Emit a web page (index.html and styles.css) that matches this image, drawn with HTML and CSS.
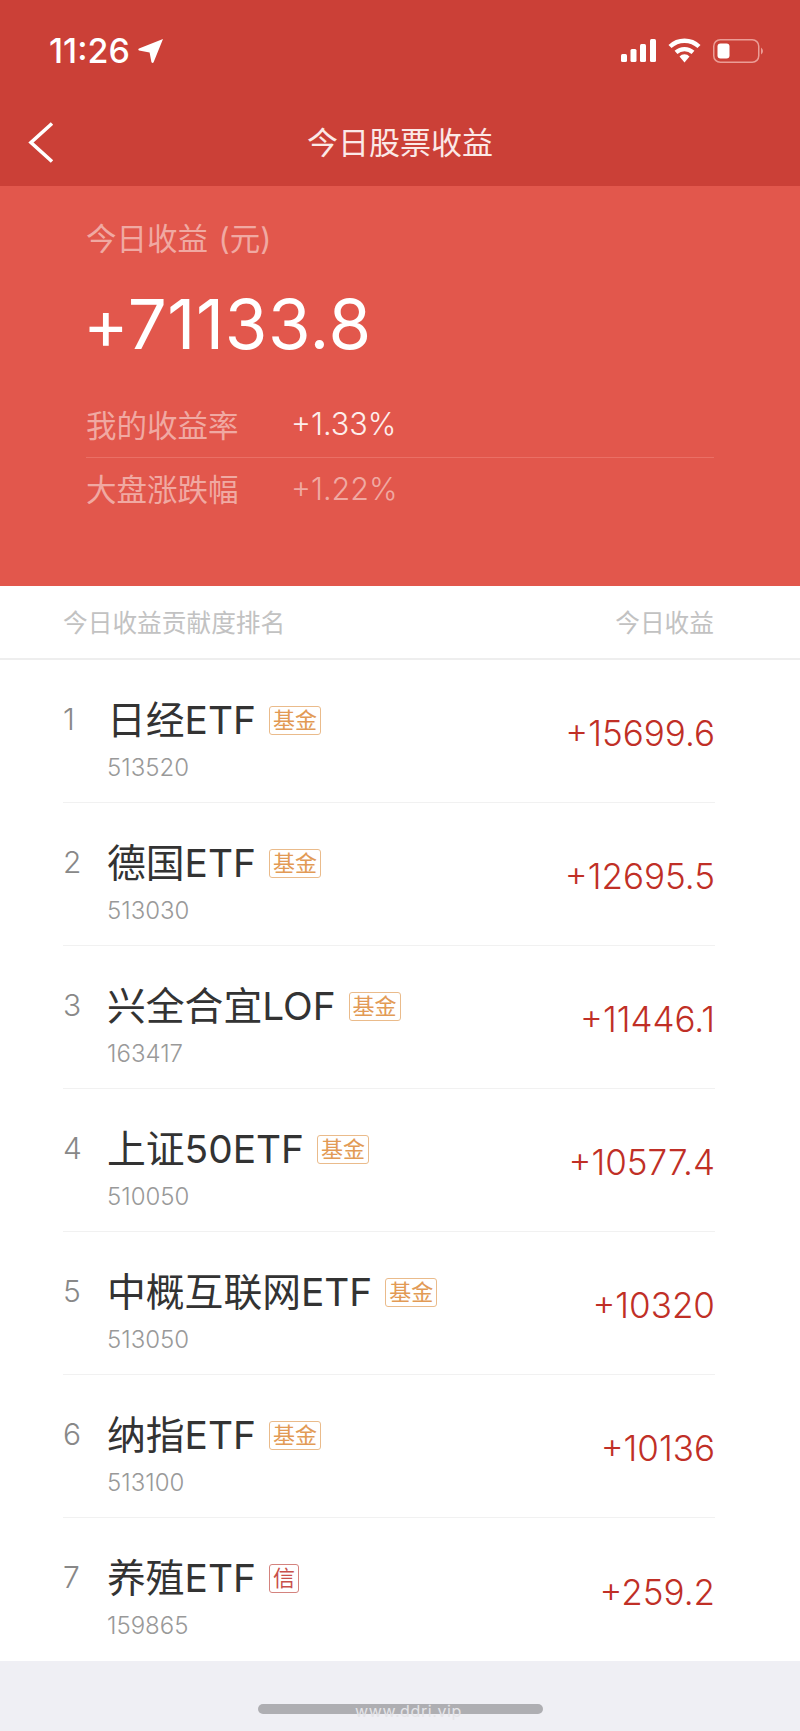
FILE: index.html
```html
<!DOCTYPE html>
<html>
	<head>
		<meta charset="utf-8">
		<title>今日股票收益</title>
		<link rel="stylesheet" href="styles.css">
	</head>
	<body>
		<div class="top">
			<div class="status">
				<div class="clock">
					<span>11:26</span>
					<svg class="arrow" width="25" height="24" viewBox="0 0 25 24"><path d="M25 0 L15.5 23.5 Q14.2 24.6 13.4 23 L11.6 13.6 L1 11.6 Q-.4 10.6 1 9.6 Z" fill="#fff"/></svg>
				</div>
				<div class="status-icons">
					<svg width="35" height="23" viewBox="0 0 35 23" fill="#fff">
						<rect x="0" y="15" width="6" height="8" rx="1.5"/>
						<rect x="9.5" y="10" width="6" height="13" rx="1.5"/>
						<rect x="19" y="5" width="6" height="18" rx="1.5"/>
						<rect x="29" y="0" width="6" height="23" rx="1.5"/>
					</svg>
					<svg width="33" height="25" viewBox="0 0 33 25">
						<path d="M2 8.5 A21 21 0 0 1 31 8.5" fill="none" stroke="#fff" stroke-width="4.4"/>
						<path d="M8 14.4 A12.5 12.5 0 0 1 25 14.4" fill="none" stroke="#fff" stroke-width="4.2"/>
						<path d="M11.5 18.4 A7 7 0 0 1 21.5 18.4 L16.5 24.5 Z" fill="#fff"/>
					</svg>
					<svg width="50" height="24" viewBox="0 0 50 24">
						<rect x=".75" y=".75" width="45" height="22.5" rx="6.5" fill="none" stroke="#eb9d96" stroke-width="1.5"/>
						<rect x="4.5" y="4.5" width="12" height="15" rx="3" fill="#fff"/>
						<path d="M48 8.5 Q50 10 50 12 Q50 14 48 15.5 Z" fill="#eb9d96"/>
					</svg>
				</div>
			</div>
			<div class="nav">
				<svg class="back" width="26" height="41" viewBox="0 0 26 41"><path d="M24 1.5 L3 20.5 L24 39.5" fill="none" stroke="#fff" stroke-width="3.6"/></svg>
				<div class="nav-title">今日股票收益</div>
			</div>
		</div>

		<div class="hero">
			<div class="hero-label">今日收益 (元)</div>
			<div class="hero-num">+71133.8</div>
			<div class="rate rate-line">
				<span class="rate-name">我的收益率</span>
				<span class="rate-val">+1.33%</span>
			</div>
			<div class="rate rate-low">
				<span class="rate-name">大盘涨跌幅</span>
				<span class="rate-val dim">+1.22%</span>
			</div>
		</div>

		<div class="head">
			<span>今日收益贡献度排名</span>
			<span>今日收益</span>
		</div>

		<div class="list">
			<div class="row">
				<div class="rank">1</div>
				<div class="info">
					<div class="name"><span>日经ETF</span><span class="tag">基金</span></div>
					<div class="code">513520</div>
				</div>
				<div class="gain">+15699.6</div>
			</div>
			<div class="row">
				<div class="rank">2</div>
				<div class="info">
					<div class="name"><span>德国ETF</span><span class="tag">基金</span></div>
					<div class="code">513030</div>
				</div>
				<div class="gain">+12695.5</div>
			</div>
			<div class="row">
				<div class="rank">3</div>
				<div class="info">
					<div class="name"><span>兴全合宜LOF</span><span class="tag">基金</span></div>
					<div class="code">163417</div>
				</div>
				<div class="gain">+11446.1</div>
			</div>
			<div class="row">
				<div class="rank">4</div>
				<div class="info">
					<div class="name"><span>上证50ETF</span><span class="tag">基金</span></div>
					<div class="code">510050</div>
				</div>
				<div class="gain">+10577.4</div>
			</div>
			<div class="row">
				<div class="rank">5</div>
				<div class="info">
					<div class="name"><span>中概互联网ETF</span><span class="tag">基金</span></div>
					<div class="code">513050</div>
				</div>
				<div class="gain">+10320</div>
			</div>
			<div class="row">
				<div class="rank">6</div>
				<div class="info">
					<div class="name"><span>纳指ETF</span><span class="tag">基金</span></div>
					<div class="code">513100</div>
				</div>
				<div class="gain">+10136</div>
			</div>
			<div class="row">
				<div class="rank">7</div>
				<div class="info">
					<div class="name"><span>养殖ETF</span><span class="tag tag-red">信</span></div>
					<div class="code">159865</div>
				</div>
				<div class="gain">+259.2</div>
			</div>
		</div>

		<div class="bottom">
			<div class="home"></div>
			<div class="mark">www.ddri.vip</div>
		</div>
	</body>
</html>
```

FILE: styles.css
```css
*{
	margin: 0;
	padding: 0;
	box-sizing: border-box;
}
body{
	width: 800px;
	height: 1731px;
	overflow: hidden;
	background-color: #efeff4;
	font-family: Inter, "Noto Sans CJK SC", sans-serif;
}

/* status bar + nav */
.top{
	height: 186px;
	background-color: #cb4037;
	color: #fff;
}
.status{
	display: flex;
	justify-content: space-between;
	align-items: flex-start;
	height: 100px;
	padding: 38px 37px 0 49px;
}
.clock{
	display: flex;
	align-items: center;
	height: 25px;
	font-weight: 500;
	font-size: 34px;
	line-height: 25px;
}
.arrow{
	margin-left: 8px;
}
.status-icons{
	display: flex;
	align-items: center;
	gap: 12px;
}
.nav{
	position: relative;
	display: flex;
	justify-content: center;
	align-items: center;
	height: 86px;
}
.back{
	position: absolute;
	left: 28px;
	top: 22px;
}
.nav-title{
	font-size: 31px;
	line-height: 40px;
	color: #fbe9e7;
}

/* summary block */
.hero{
	height: 400px;
	padding: 32px 86px 0;
	background-color: #e2574c;
	color: #f0a9a2;
}
.hero-label{
	font-size: 30.5px;
	line-height: 42px;
	word-spacing: 2px;
}
.hero-num{
	margin: 26px 0 30px -3px;
	font-size: 69px;
	font-weight: 400;
	line-height: 76px;
	letter-spacing: .6px;
	color: #fff;
}
.rate{
	display: flex;
	align-items: center;
	height: 64px;
	font-size: 30.5px;
}
.rate-line{
	height: 66px;
	padding-bottom: 2px;
	border-bottom: 1px solid #ea6f65;
}
.rate-low{
	height: 60px;
}
.rate-name{
	width: 205px;
}
.rate-val{
	font-weight: 300;
	color: #fdeeec;
}
.rate-val.dim{
	color: #f0a9a2;
}

/* list header */
.head{
	display: flex;
	justify-content: space-between;
	align-items: center;
	height: 74px;
	padding: 0 86px 2px 63px;
	background-color: #fff;
	border-bottom: 2px solid #eeeeee;
	font-size: 24.7px;
	color: #c2c2c2;
}

/* list */
.list{
	height: 1001px;
	padding: 0 85px 0 63px;
	background-color: #fff;
}
.row{
	display: flex;
	align-items: center;
	height: 143px;
	border-bottom: 1px solid #f1f1f1;
}
.row:last-child{
	border-bottom: none;
}
.rank{
	align-self: flex-start;
	width: 44px;
	margin-top: 37px;
	font-size: 30px;
	font-weight: 300;
	line-height: 44px;
	color: #888;
}
.info{
	flex: 1;
	align-self: flex-start;
	padding-top: 36px;
}
.name{
	display: flex;
	align-items: center;
	height: 48px;
	font-size: 38.8px;
	line-height: 48px;
	color: #333;
}
.tag{
	display: flex;
	justify-content: center;
	align-items: center;
	height: 29px;
	margin-left: 13px;
	padding: 0 3px;
	border: 1.5px solid #eabb8b;
	border-radius: 3px;
	font-size: 22px;
	line-height: 26px;
	color: #e29a55;
}
.tag-red{
	padding: 0 3px;
	border-color: #d4837e;
	color: #c8504a;
}
.code{
	margin-top: 8px;
	font-size: 24px;
	font-weight: 300;
	line-height: 32px;
	color: #999;
}
.gain{
	margin-top: 4px;
	font-size: 35px;
	font-weight: 300;
	line-height: 44px;
	color: #c02f26;
}

/* bottom strip */
.bottom{
	position: relative;
	display: flex;
	justify-content: center;
	height: 70px;
	padding-top: 43px;
	background-color: #efeff4;
}
.home{
	width: 285px;
	height: 10px;
	border-radius: 5px;
	background-color: #aeaeb2;
}
.mark{
	position: absolute;
	left: 355px;
	top: 40px;
	font-size: 16px;
	line-height: 20px;
	letter-spacing: .6px;
	color: #e4e4e8;
}
```
